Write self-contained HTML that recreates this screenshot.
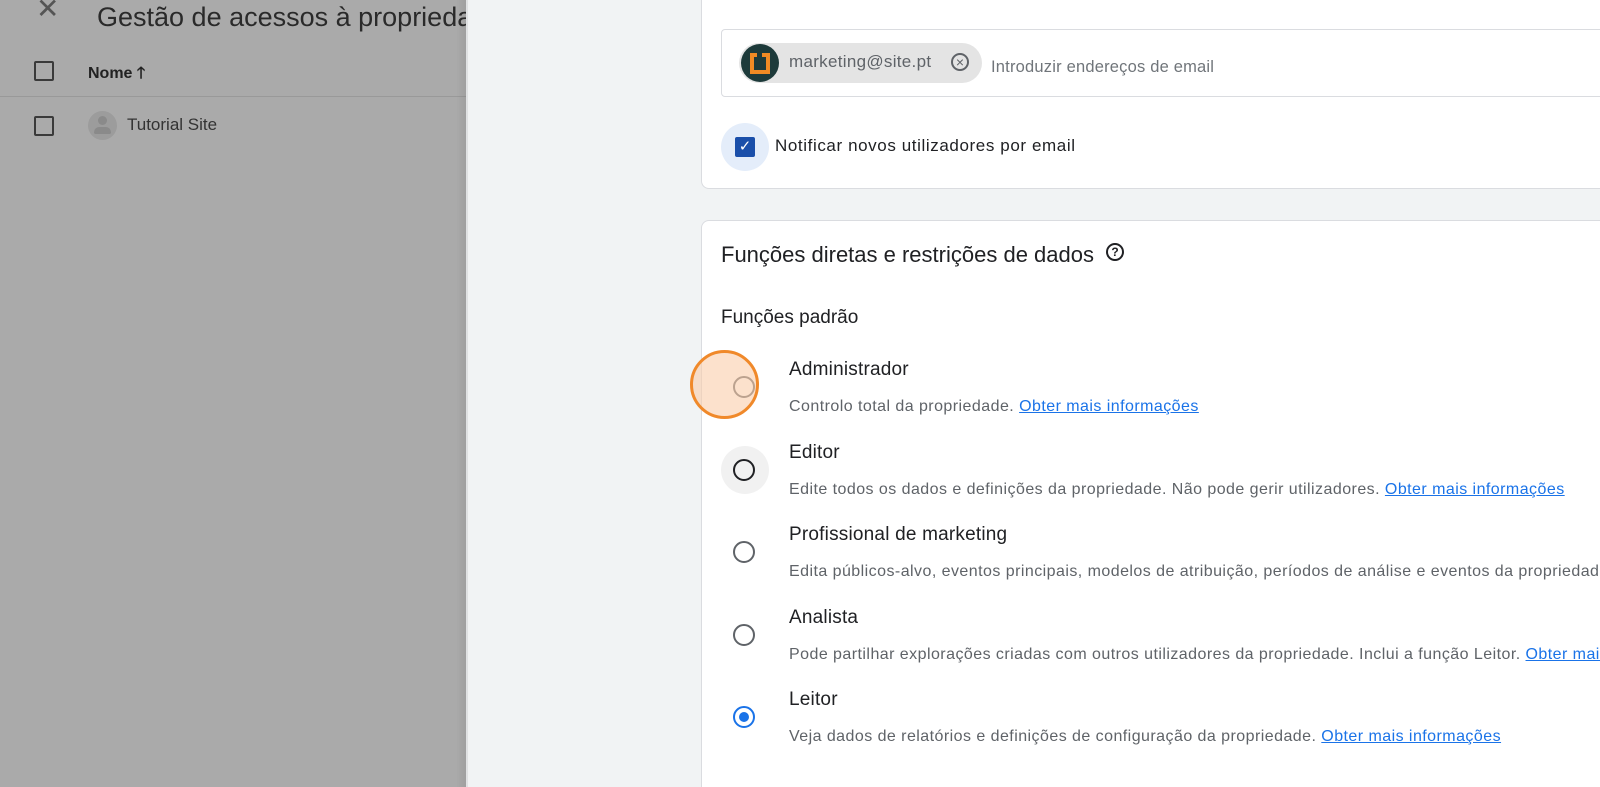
<!DOCTYPE html>
<html><head><meta charset="utf-8"><style>
*{margin:0;padding:0;box-sizing:border-box}
html,body{width:1600px;height:787px;overflow:hidden}
body{background:#f1f3f4;font-family:"Liberation Sans",Arial,sans-serif;}
#w{position:relative;width:1600px;height:787px;overflow:hidden}
.a{position:absolute;white-space:nowrap}
.left{position:absolute;left:0;top:0;width:466px;height:787px;background:#aaaaaa;overflow:hidden}
.cb{position:absolute;width:20px;height:20px;border:2px solid #3a3a3a;border-radius:2px}
.card{position:absolute;background:#fff;border:1px solid #dadce0;border-radius:8px}
.radio{position:absolute;width:22px;height:22px;border:2px solid #5f6368;border-radius:50%}
.rt{font-size:19px;color:#202124;letter-spacing:0.2px}
.rd{font-size:16px;color:#5f6368;letter-spacing:0.45px}
.rd a{color:#1a73e8;text-decoration:underline}
</style></head><body><div id="w">
<div class="left">
 <div class="a" style="left:36px;top:-8px;font-size:28px;color:#555">✕</div>
 <div class="a" style="left:97px;top:2px;font-size:27px;color:#2a2a2a">Gestão de acessos à propriedade</div>
 <div class="cb" style="left:34px;top:61px"></div>
 <div class="a" style="left:88px;top:62px;font-size:16px;font-weight:bold;color:#222">Nome 🡑</div>
 <div style="position:absolute;left:0;top:96px;width:466px;height:1px;background:#999"></div>
 <div class="cb" style="left:34px;top:116px"></div>
 <div style="position:absolute;left:88px;top:111px;width:29px;height:29px;border-radius:50%;background:#9c9c9c"></div>
 <div style="position:absolute;left:98px;top:116px;width:9px;height:9px;border-radius:50%;background:#8a8a8a"></div>
 <div style="position:absolute;left:94px;top:127px;width:17px;height:7px;border-radius:6px 6px 2px 2px;background:#8a8a8a"></div>
 <div class="a" style="left:127px;top:115px;font-size:17px;color:#333">Tutorial Site</div>
</div>
<div style="position:absolute;left:456px;top:0;width:12px;height:787px;background:linear-gradient(to right,rgba(0,0,0,0),rgba(0,0,0,0.08))"></div>

<div class="card" style="left:701px;top:-20px;width:920px;height:209px">
 <div style="position:absolute;left:19px;top:48px;width:900px;height:68px;border:1px solid #dadce0;border-radius:4px">
  <div style="position:absolute;left:17px;top:13px;width:243px;height:40px;border-radius:20px;background:#e4e4e4"></div>
  <div style="position:absolute;left:19px;top:14px;width:38px;height:38px;border-radius:50%;background:#1d3a3a;overflow:hidden">
   <div style="position:absolute;left:9px;top:9px;width:20px;height:21px;border:4px solid #f08a24"></div>
   <div style="position:absolute;left:16px;top:9px;width:5px;height:14px;background:#1d3a3a"></div>
  </div>
  <div class="a" style="left:67px;top:22px;font-size:17px;color:#5f6368;letter-spacing:0.3px">marketing@site.pt</div>
  <div style="position:absolute;left:229px;top:23px;width:18px;height:18px;border:2px solid #5f6368;border-radius:50%;color:#5f6368;font-size:14px;line-height:14px;text-align:center">×</div>
  <div class="a" style="left:269px;top:28px;font-size:16.5px;color:#70757a;letter-spacing:0.2px">Introduzir endereços de email</div>
 </div>
 <div style="position:absolute;left:19px;top:142px;width:48px;height:48px;border-radius:50%;background:#e4edfa"></div>
 <div style="position:absolute;left:33px;top:156px;width:20px;height:20px;background:#1a4faa;border-radius:2px;color:#fff;font-size:15px;line-height:20px;text-align:center">✓</div>
 <div class="a" style="left:73px;top:155px;font-size:17px;color:#202124;letter-spacing:0.6px">Notificar novos utilizadores por email</div>
</div>

<div class="card" style="left:701px;top:220px;width:920px;height:580px">
 <div class="a" style="left:19px;top:21px;font-size:22px;color:#202124">Funções diretas e restrições de dados</div>
 <div style="position:absolute;left:404px;top:22px;width:18px;height:18px;border:2px solid #202124;border-radius:50%;font-size:12px;font-weight:bold;line-height:14px;text-align:center;color:#202124">?</div>
 <div class="a" style="left:19px;top:86px;font-size:19px;color:#202124">Funções padrão</div>
</div>

<div style="position:absolute;left:721px;top:446px;width:48px;height:48px;border-radius:50%;background:#f1f1f1"></div>
<div class="radio" style="left:733px;top:376px;border-color:#5f6368"></div>
<div style="position:absolute;left:690px;top:350px;width:69px;height:69px;border-radius:50%;border:3px solid #f0892a;background:rgba(250,205,170,0.6)"></div>
<div class="radio" style="left:733px;top:459px;border-color:#202124"></div>
<div class="radio" style="left:733px;top:541px"></div>
<div class="radio" style="left:733px;top:624px"></div>
<div class="radio" style="left:733px;top:706px;border-color:#1a73e8"></div>
<div style="position:absolute;left:739px;top:712px;width:10px;height:10px;border-radius:50%;background:#1a73e8"></div>

<div class="a rt" style="left:789px;top:359px">Administrador</div>
<div class="a rd" style="left:789px;top:398px">Controlo total da propriedade. <a>Obter mais informações</a></div>
<div class="a rt" style="left:789px;top:442px">Editor</div>
<div class="a rd" style="left:789px;top:481px">Edite todos os dados e definições da propriedade. Não pode gerir utilizadores. <a>Obter mais informações</a></div>
<div class="a rt" style="left:789px;top:524px">Profissional de marketing</div>
<div class="a rd" style="left:789px;top:563px">Edita públicos-alvo, eventos principais, modelos de atribuição, períodos de análise e eventos da propriedade.</div>
<div class="a rt" style="left:789px;top:607px">Analista</div>
<div class="a rd" style="left:789px;top:646px">Pode partilhar explorações criadas com outros utilizadores da propriedade. Inclui a função Leitor. <a>Obter mais informações</a></div>
<div class="a rt" style="left:789px;top:689px">Leitor</div>
<div class="a rd" style="left:789px;top:728px">Veja dados de relatórios e definições de configuração da propriedade. <a>Obter mais informações</a></div>
</div></body></html>
